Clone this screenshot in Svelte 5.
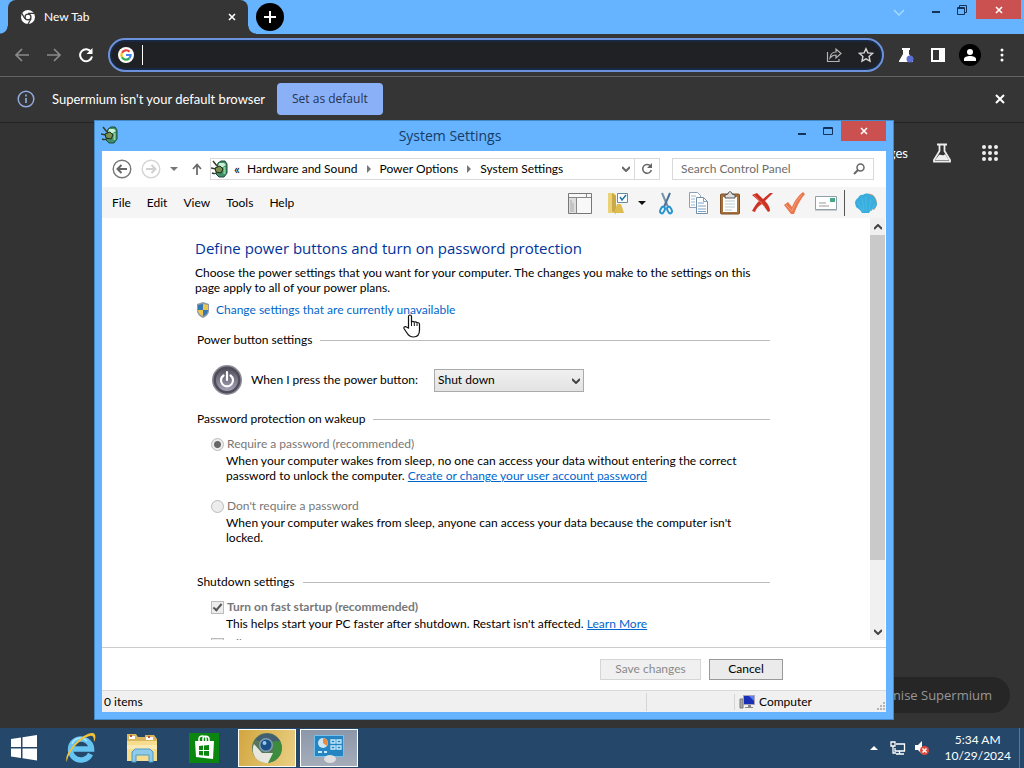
<script>
  let query = '';
  let address = '';
  let powerAction = 'Shut down';

  const menus = ['File', 'Edit', 'View', 'Tools', 'Help'];
  const crumbs = ['Hardware and Sound', 'Power Options', 'System Settings'];
</script>

<!-- battery and plug icon used by the power options window -->
{#snippet powerIcon()}
  <svg class="power-icon" viewBox="0 0 18 18" width="18" height="18" aria-hidden="true">
    <path d="M7 3l3-2h4l2 3v9l-3 4H8l-3-3z" fill="#3f8f68" stroke="#1e4b39" />
    <path d="M8 3h5l2 2-3 2H7z" fill="#c9efd5" />
    <path d="M13.500 7v7" stroke="#86d3a0" stroke-width="2" />
    <path d="M2 1l4 5M0 8l5 1" stroke="#333d28" stroke-width="1.500" />
    <path d="M4 8l5-2 3 3-2 4-5-1z" fill="#7c8f50" stroke="#1d2b1b" />
    <path d="M1 13c3 1 4 1 5-1" stroke="#2b4033" stroke-width="1.500" fill="none" />
  </svg>
{/snippet}

<div class="desktop">
  <!-- browser -->
  <div class="browser">
    <div class="tab-strip">
      <span class="tab-foot"></span>
      <div class="tab">
        <svg viewBox="0 0 16 16" width="16" height="16" aria-hidden="true">
          <circle cx="8" cy="8" r="7" fill="#fff" />
          <circle cx="8" cy="8" r="3.600" fill="#353535" />
          <circle cx="8" cy="8" r="2.300" fill="#fff" />
          <path d="M8 4.400h6.500M4.900 9.800L1.800 4.400M11.100 9.800L8 15" stroke="#353535" stroke-width="1.200" />
        </svg>
        <span class="tab-title">New Tab</span>
        <button class="plain" aria-label="Close tab">
          <svg viewBox="0 0 8 8" width="8" height="8"><path d="M1 1l6 6M7 1L1 7" stroke="#fff" stroke-width="1.600" /></svg>
        </button>
      </div>
      <span class="tab-foot right"></span>
      <button class="new-tab" aria-label="New tab">
        <svg viewBox="0 0 12 12" width="12" height="12"><path d="M6 0v12M0 6h12" stroke="#fff" stroke-width="2" /></svg>
      </button>
      <div class="browser-controls">
        <button class="plain search-tabs" aria-label="Search tabs">
          <svg viewBox="0 0 12 8" width="12" height="8"><path d="M1 1l5 5 5-5" fill="none" stroke="#a4dcff" stroke-width="1.500" /></svg>
        </button>
        <button class="plain control" aria-label="Minimize">
          <svg viewBox="0 0 10 10" width="10" height="10"><path d="M1 7h8" stroke="#12345a" stroke-width="2" /></svg>
        </button>
        <button class="plain control" aria-label="Restore">
          <svg viewBox="0 0 10 10" width="10" height="10"><path d="M.5 2.500h7v7h-7zM2.500 2.500v-2h7v7h-2M.5 3.500h7" fill="none" stroke="#12345a" /></svg>
        </button>
        <button class="close-button browser-close" aria-label="Close">
          <svg viewBox="0 0 8 8" width="8" height="8"><path d="M1 1l6 6M7 1L1 7" stroke="#fff" stroke-width="1.600" /></svg>
        </button>
      </div>
    </div>

    <div class="toolbar">
      <button class="plain" aria-label="Back">
        <svg viewBox="0 0 16 16" width="16" height="16"><path d="M15 8H2M8 2L2 8l6 6" fill="none" stroke="#8a8a8a" stroke-width="1.700" /></svg>
      </button>
      <button class="plain" aria-label="Forward">
        <svg viewBox="0 0 16 16" width="16" height="16"><path d="M1 8h13M8 2l6 6-6 6" fill="none" stroke="#8a8a8a" stroke-width="1.700" /></svg>
      </button>
      <button class="plain" aria-label="Reload">
        <svg viewBox="0 0 16 16" width="16" height="16"><path d="M13.200 5A6 6 0 1 0 14 9.500" fill="none" stroke="#fff" stroke-width="2" /><path d="M14.500 1v6h-6z" fill="#fff" /></svg>
      </button>
      <div class="omnibox">
        <svg viewBox="0 0 16 16" width="16" height="16" aria-hidden="true">
          <circle cx="8" cy="8" r="8" fill="#fff" />
          <g fill="none" stroke-width="2.200">
            <path d="M11.500 4.800A4.600 4.600 0 0 0 4 5.700" stroke="#ea4335" />
            <path d="M4 5.700a4.600 4.600 0 0 0 0 4.600" stroke="#fbbc05" />
            <path d="M4 10.300a4.600 4.600 0 0 0 7.200 1.100" stroke="#34a853" />
            <path d="M11.200 11.400A4.600 4.600 0 0 0 12.600 8H8" stroke="#4285f4" />
          </g>
        </svg>
        <span class="caret"></span>
        <input aria-label="Address" bind:value={address} />
        <button class="plain" aria-label="Share">
          <svg viewBox="0 0 16 16" width="16" height="16"><path d="M1.500 5v9.500H13V12M4 11c.5-4 2.500-6 6-6V2l5 4.500L10 11V8c-3 0-4.500 1-6 3z" fill="none" stroke="#b4b4b4" stroke-width="1.200" /></svg>
        </button>
        <button class="plain" aria-label="Bookmark">
          <svg viewBox="0 0 16 16" width="16" height="16"><path d="M8 1.700l1.900 4.200 4.600.5-3.400 3.100.9 4.600-4-2.300-4 2.300.9-4.600L1.500 6.400l4.600-.5z" fill="none" stroke="#d5d5d5" stroke-width="1.400" /></svg>
        </button>
      </div>
      <button class="plain" aria-label="Experiments">
        <svg viewBox="0 0 16 16" width="16" height="16"><path d="M4 1h8v2h-1v4l4 7v1H1v-1l4-7V3H4z" fill="#fff" /><circle cx="12" cy="12" r="3.500" fill="#5b6fd0" /></svg>
      </button>
      <button class="plain" aria-label="Side panel">
        <svg viewBox="0 0 16 16" width="16" height="16"><path d="M1 1h14v14H1z" fill="#fff" /><path d="M3 3h6v10H3z" fill="#353535" /></svg>
      </button>
      <button class="plain profile" aria-label="Profile">
        <svg viewBox="0 0 22 22" width="22" height="22"><circle cx="11" cy="11" r="11" fill="#000" /><circle cx="11" cy="8" r="3" fill="#fff" /><path d="M5 17v-2c0-4 12-4 12 0v2z" fill="#fff" /></svg>
      </button>
      <button class="plain" aria-label="Menu">
        <svg viewBox="0 0 16 16" width="16" height="16" fill="#fff"><circle cx="8" cy="3" r="1.500" /><circle cx="8" cy="8" r="1.500" /><circle cx="8" cy="13" r="1.500" /></svg>
      </button>
    </div>

    <div class="infobar">
      <svg viewBox="0 0 18 18" width="18" height="18" aria-hidden="true"><circle cx="9" cy="9" r="7.800" fill="none" stroke="#91a9de" stroke-width="1.500" /><path d="M9 8v5M9 4.500v2" stroke="#91a9de" stroke-width="1.700" /></svg>
      <span>Supermium isn't your default browser</span>
      <button class="default-button">Set as default</button>
      <button class="plain infobar-close" aria-label="Dismiss">
        <svg viewBox="0 0 10 10" width="10" height="10"><path d="M1 1l8 8M9 1L1 9" stroke="#fff" stroke-width="2" /></svg>
      </button>
    </div>

    <div class="page">
      <nav class="page-nav">
        <a href="#images">Images</a>
        <button class="plain" aria-label="Labs">
          <svg viewBox="0 0 20 20" width="20" height="20"><path d="M5 1.500h10M7.500 2v6L2 17v1.500h16V17l-5.500-9V2" fill="none" stroke="#eee" stroke-width="1.800" /><path d="M3 17l4-5c2-1 4 2 6-1l4 6z" fill="#eee" /></svg>
        </button>
        <button class="plain" aria-label="Apps">
          <svg viewBox="0 0 18 18" width="18" height="18" fill="#eee">
            {#each [3, 9, 15] as cy}
              {#each [3, 9, 15] as cx}
                <circle {cx} {cy} r="2" />
              {/each}
            {/each}
          </svg>
        </button>
      </nav>
      <button class="customise">Customise Supermium</button>
    </div>
  </div>

  <!-- system settings window -->
  <div class="window">
    <header class="title-bar">
      {@render powerIcon()}
      <h1>System Settings</h1>
      <div class="window-controls">
        <button class="plain control" aria-label="Minimize">
          <svg viewBox="0 0 10 10" width="10" height="10"><path d="M1 8h8" stroke="#12345a" stroke-width="2" /></svg>
        </button>
        <button class="plain control" aria-label="Maximize">
          <svg viewBox="0 0 10 10" width="10" height="10"><path d="M.5 1.500h9v7h-9zM.5 2.500h9" fill="none" stroke="#12345a" /></svg>
        </button>
        <button class="close-button" aria-label="Close">
          <svg viewBox="0 0 8 8" width="8" height="8"><path d="M1 1l6 6M7 1L1 7" stroke="#fff" stroke-width="1.600" /></svg>
        </button>
      </div>
    </header>

    <div class="client">
      <div class="address-row">
        <button class="plain" aria-label="Back">
          <svg viewBox="0 0 20 20" width="20" height="20" fill="none"><circle cx="10" cy="10" r="8.800" stroke="#777" stroke-width="1.400" /><path d="M15 10H6M9.500 6l-4 4 4 4" stroke="#666" stroke-width="2" /></svg>
        </button>
        <button class="plain" aria-label="Forward">
          <svg viewBox="0 0 20 20" width="20" height="20" fill="none"><circle cx="10" cy="10" r="8.800" stroke="#d4d4d4" stroke-width="1.400" /><path d="M5 10h9M10.500 6l4 4-4 4" stroke="#d0d0d0" stroke-width="2" /></svg>
        </button>
        <button class="plain" aria-label="Recent locations">
          <svg viewBox="0 0 8 4" width="8" height="4"><path d="M0 0h8L4 4z" fill="#777" /></svg>
        </button>
        <button class="plain up" aria-label="Up">
          <svg viewBox="0 0 12 12" width="12" height="12"><path d="M6 12V2M2 6l4-4.500L10 6" fill="none" stroke="#666" stroke-width="1.700" /></svg>
        </button>
        <div class="address">
          {@render powerIcon()}
          <span class="chevrons">«</span>
          {#each crumbs as crumb, i}
            {#if i > 0}
              <svg viewBox="0 0 4 8" width="4" height="8" aria-hidden="true"><path d="M0 0l4 4-4 4z" fill="#777" /></svg>
            {/if}
            <a href="#{i}">{crumb}</a>
          {/each}
          <button class="plain drop" aria-label="Previous locations">
            <svg viewBox="0 0 8 6" width="8" height="6"><path d="M0 1l4 4 4-4" fill="none" stroke="#666" stroke-width="2" /></svg>
          </button>
          <button class="plain refresh" aria-label="Refresh">
            <svg viewBox="0 0 12 12" width="12" height="12"><path d="M9.500 3A4.400 4.400 0 1 0 10.400 7" fill="none" stroke="#666" stroke-width="1.500" /><path d="M11 0v5H6z" fill="#666" /></svg>
          </button>
        </div>
        <div class="search">
          <input type="text" placeholder="Search Control Panel" aria-label="Search Control Panel" bind:value={query} />
          <svg viewBox="0 0 12 12" width="12" height="12" aria-hidden="true"><circle cx="7.500" cy="4.500" r="3.500" fill="none" stroke="#666" stroke-width="1.500" /><path d="M5 7l-4 4" stroke="#666" stroke-width="2" /></svg>
        </div>
      </div>

      <div class="menu-bar">
        {#each menus as menu}
          <button class="plain menu">{menu}</button>
        {/each}
        <div class="tools">
          <button class="plain" aria-label="Layout">
            <svg viewBox="0 0 24 24" width="24" height="24"><path d="M.5 2.500h23v20H.5z" fill="#f8f8f8" stroke="#777" /><path d="M1 6.500h22M8.500 6.500v16M18.500 3v3" stroke="#888" /><path d="M1 7h7v15H1z" fill="#ddd" /><path d="M3 9v12M5 12v9" stroke="#aaa" /></svg>
          </button>
          <button class="plain organize" aria-label="Organize">
            <svg viewBox="0 0 24 24" width="24" height="24"><path d="M2 2h6l2 2v18H2z" fill="#ead376" /><path d="M6 2l4 3v18l-4-3z" fill="#c9a948" /><path d="M11 13h4l3 9H8z" fill="#ddbc50" /><path d="M11.500 2.500h10v9h-10z" fill="#fff" stroke="#668b9b" /><path d="M14 6l2 3 4-5" fill="none" stroke="#1d76a3" stroke-width="1.500" /></svg>
            <svg viewBox="0 0 8 4" width="8" height="4"><path d="M0 0h8L4 4z" fill="#111" /></svg>
          </button>
          <button class="plain" aria-label="Cut">
            <svg viewBox="0 0 24 24" width="24" height="24" fill="none"><path d="M8 2l6 14" stroke="#7793aa" stroke-width="2" /><path d="M16 2l-6 14" stroke="#4d7497" stroke-width="2" /><ellipse cx="8.500" cy="19" rx="2" ry="3.500" transform="rotate(25 8.500 19)" stroke="#2794d0" stroke-width="2" /><ellipse cx="15.500" cy="19" rx="2" ry="3.500" transform="rotate(-25 15.500 19)" stroke="#2794d0" stroke-width="2" /></svg>
          </button>
          <button class="plain" aria-label="Copy">
            <svg viewBox="0 0 24 24" width="24" height="24"><path d="M3.500 1.500h8l3 3v12h-11z" fill="#fff" stroke="#8ba0b5" /><path d="M5 5h5M5 8h4M5 11h4M5 14h4" stroke="#9bb8d2" /><path d="M10.500 6.500h7l4 4v12h-11z" fill="#fff" stroke="#7290aa" /><path d="M17.500 6.500v4h4M12 12h6M12 15h8M12 18h8M12 20.500h8" fill="none" stroke="#7aa3c7" /></svg>
          </button>
          <button class="plain" aria-label="Paste">
            <svg viewBox="0 0 24 24" width="24" height="24"><rect x="2.500" y="3" width="19" height="20" rx="1" fill="#a8713b" stroke="#7d5129" /><path d="M5 6h14v15H5z" fill="#fff" /><path d="M7 10h10M7 13h10M7 16h10M7 19h7" stroke="#b9c8d3" /><path d="M7 7V4l3-1c0-3 4-3 4 0l3 1v3z" fill="#ddd" stroke="#555" /></svg>
          </button>
          <button class="plain" aria-label="Delete">
            <svg viewBox="0 0 24 24" width="24" height="24"><path d="M2 4l5-2 6 6 7-6h3l-8 8c3 3 5 6 5 10l-2 1c-2-3-4-6-6-8-4 2-6 5-7 8l-3-1c2-4 4-7 7-10z" fill="#cd3324" /><path d="M4 4l11 12" stroke="#ed7761" /></svg>
          </button>
          <button class="plain" aria-label="Confirm">
            <svg viewBox="0 0 24 24" width="24" height="24"><path d="M2 14l4-3 4 5c3-7 6-11 11-15l2 2c-5 6-8 12-11 20H9z" fill="#e9784e" /><path d="M4 14l6 6c3-8 6-12 10-16" fill="none" stroke="#f7a17c" /></svg>
          </button>
          <button class="plain" aria-label="Mail">
            <svg viewBox="0 0 24 24" width="24" height="24"><path d="M1.500 5.500h21v13h-21z" fill="#fff" stroke="#8da0ac" /><path d="M16 7h5v4h-5z" fill="#45a889" /><path d="M5 12h7M5 15h10" stroke="#999" /><path d="M1 19.500h22" stroke="#ccc" /></svg>
          </button>
          <span class="separator"></span>
          <button class="plain" aria-label="Shell">
            <svg viewBox="0 0 24 24" width="24" height="24"><path d="M5 9c3-5 9-8 14-5 5 4 5 11 1 15z" fill="#b99773" /><path d="M1 12c0-2 1-4 3-5 1-2 3-4 5-3 2-2 5-2 7 0 3 0 5 2 5 5 3 3 2 6 0 8l-4 2-2 3H8l-2-3-4-3z" fill="#37aede" /><path d="M9 21L4 11m6 9L8 7m4 13V6m3 14l2-12m0 12l4-7" stroke="#4dbae6" /></svg>
          </button>
        </div>
      </div>

      <div class="body">
        <div class="content">
          <h2>Define power buttons and turn on password protection</h2>
          <p>Choose the power settings that you want for your computer. The changes you make to the settings on this<br />page apply to all of your power plans.</p>
          <a class="admin-link" href="#unlock">
            <svg viewBox="0 0 16 16" width="16" height="16" aria-hidden="true"><path d="M8 0l6 2v6c0 4-2 6-6 8-4-2-6-4-6-8V2z" fill="#8e9ba5" /><path d="M8 2v6H3V3z" fill="#3479b4" /><path d="M8 2l5 1v5H8z" fill="#edc650" /><path d="M3 8h5v6c-3-1-5-3-5-6z" fill="#edc650" /><path d="M8 8h5c0 3-2 5-5 6z" fill="#3479b4" /></svg>
            Change settings that are currently unavailable
          </a>

          <section>
            <h3>Power button settings</h3>
            <div class="power-row">
              <svg viewBox="0 0 32 32" width="32" height="32" aria-hidden="true">
                <defs><linearGradient id="orb" x1="0" y1="0" x2="0" y2="1"><stop offset="0" stop-color="#55535f" /><stop offset="1" stop-color="#a5a3b7" /></linearGradient></defs>
                <circle cx="16" cy="16" r="15" fill="#8e8c97" />
                <circle cx="16" cy="16" r="13.500" fill="#4f4d5a" />
                <circle cx="16" cy="16" r="11" fill="url(#orb)" />
                <path d="M12.500 11.500a6 6 0 1 0 7 0M16 8v8" fill="none" stroke="#fff" stroke-width="2.200" stroke-linecap="round" />
              </svg>
              <label for="power-action">When I press the power button:</label>
              <div class="select">
                <select id="power-action" bind:value={powerAction}>
                  <option>Do nothing</option>
                  <option>Sleep</option>
                  <option>Shut down</option>
                </select>
                <svg viewBox="0 0 8 6" width="8" height="6" aria-hidden="true"><path d="M0 1l4 4 4-4" fill="none" stroke="#444" stroke-width="2" /></svg>
              </div>
            </div>
          </section>

          <section>
            <h3>Password protection on wakeup</h3>
            <label class="option"><input type="radio" name="wakeup" checked disabled />Require a password (recommended)</label>
            <p class="detail">When your computer wakes from sleep, no one can access your data without entering the correct<br />password to unlock the computer. <a href="#account">Create or change your user account password</a></p>
            <label class="option second"><input type="radio" name="wakeup" disabled />Don't require a password</label>
            <p class="detail">When your computer wakes from sleep, anyone can access your data because the computer isn't<br />locked.</p>
          </section>

          <section class="shutdown">
            <h3>Shutdown settings</h3>
            <label class="option strong"><input type="checkbox" checked disabled />Turn on fast startup (recommended)</label>
            <p class="detail">This helps start your PC faster after shutdown. Restart isn't affected. <a href="#learn">Learn More</a></p>
            <label class="option next"><input type="checkbox" disabled />Hibernate</label>
          </section>
        </div>

        <div class="scrollbar">
          <svg viewBox="0 0 8 6" width="8" height="6" aria-hidden="true"><path d="M0 5l4-4 4 4" fill="none" stroke="#444" stroke-width="2" /></svg>
          <div class="thumb"></div>
          <svg viewBox="0 0 8 6" width="8" height="6" aria-hidden="true"><path d="M0 1l4 4 4-4" fill="none" stroke="#444" stroke-width="2" /></svg>
        </div>
      </div>

      <div class="actions">
        <button class="save" disabled>Save changes</button>
        <button class="cancel">Cancel</button>
      </div>

      <footer class="status">
        <span class="items">0 items</span>
        <span class="blank"></span>
        <span class="zone">
          <svg viewBox="0 0 16 16" width="16" height="16" aria-hidden="true"><path d="M1 5h3v9H1z" fill="#aaa" stroke="#777" /><path d="M4.500 1.500h11v9h-11z" fill="#1a2fb5" stroke="#a5a5b8" /><path d="M10 2h5v5z" fill="#5b7df0" /><path d="M9 11h3v2h2v1H6v-1h3z" fill="#888" /></svg>
          Computer
        </span>
        <svg class="grip" viewBox="0 0 9 9" width="9" height="9" fill="#b5b5b5" aria-hidden="true"><path d="M7 0h2v2H7zM7 3h2v2H7zM7 6h2v2H7zM4 3h2v2H4zM4 6h2v2H4zM1 6h2v2H1z" /></svg>
      </footer>
    </div>
  </div>

  <!-- mouse pointer -->
  <svg class="pointer" viewBox="0 0 18 24" width="18" height="24" aria-hidden="true"><path d="M5.500 14V2.500c0-2 3-2 3 0v6c0-1.500 2.600-1.500 2.800.3 0-1.200 2.500-1.200 2.700.5.200-1 2.500-.8 2.500 1V16c0 4-2 7-6 7-3.500 0-5-1.500-6.500-4L1 14.500c-.6-1.500 1.300-2.500 2.500-1.500z" fill="#fff" stroke="#111" stroke-width="1.200" /><path d="M8.500 8v4M11.300 9v3M14 9.500V12" stroke="#111" /></svg>

  <!-- taskbar -->
  <div class="taskbar">
    <button class="plain start" aria-label="Start">
      <svg viewBox="0 0 28 26" width="28" height="26"><path d="M1 4l10-1.500V12H1zM12.500 2.200L27 0v12H12.500zM1 13.500h10V23L1 21.500zM12.500 13.500H27V25.500l-14.500-2.200z" fill="#fff" /></svg>
    </button>
    <button class="plain task" aria-label="Internet Explorer">
      <svg viewBox="0 0 32 32" width="32" height="32" fill="none"><path d="M26.500 22a10.500 10.500 0 1 1 1-5H9" stroke="#66c4f2" stroke-width="5.500" /><path d="M23 9a9 9 0 0 0-15 3" stroke="#aee6fc" stroke-width="1.500" /><path d="M3 30C-2 22 20-1 29 1c3 1 3 5 1 9 0-5-1-7-4-6C16 6 4 20 3 30z" fill="#efc23a" /></svg>
    </button>
    <button class="plain task" aria-label="File Explorer">
      <svg viewBox="0 0 32 32" width="32" height="32"><path d="M1 2h9l2 3h7V3h9l3 4v22H1z" fill="#d9b65c" /><path d="M3 4h6v3H3zM20 5h7v3h-7z" fill="#fff" /><path d="M4 3h2v2H4zM22 4h2v2h-2z" fill="#c74c37" /><path d="M1 9h30v20H1z" fill="#f6dc8e" /><path d="M1 15h30" stroke="#fbe9b4" stroke-width="4" /><path d="M6 30V20l3-3h15l3 3v10h-4v-7H10v7z" fill="#8dcbe9" stroke="#4f9bc5" /></svg>
    </button>
    <button class="plain task" aria-label="Store">
      <svg viewBox="0 0 32 32" width="32" height="32"><path d="M1 1h30v30H1z" fill="#0b870f" /><path d="M11 10V7c0-4 7-4 7 0v3M15 10V6c1-3 6-2 6 1v3" fill="none" stroke="#fff" stroke-width="1.500" /><path d="M7 9h19l-1 18-17-2z" fill="#fff" /><path d="M11 14l4-.5V18h-4zM16 13.400l5-.5V18h-5zM11 19h4v4.500l-4-.5zM16 19h5v5l-5-.5z" fill="#0b870f" /></svg>
    </button>
    <button class="plain running gold" aria-label="Supermium">
      <svg viewBox="0 0 32 32" width="32" height="32"><circle cx="16" cy="16" r="15" fill="#56775b" /><path d="M4 8a15 15 0 0 1 25 1L16 10z" fill="#435f72" /><path d="M29 9c5 10-2 21-13 22l6-12c1-4 0-7-3-9z" fill="#3b8c3c" /><path d="M3 12l8 9h11l-5 10C5 31-1 21 3 12z" fill="#e8e7df" /><circle cx="15" cy="13" r="7" fill="#7f9fb2" /><circle cx="15" cy="13" r="5.500" fill="#1c4f85" /><circle cx="13.500" cy="11" r="2" fill="#92c8e9" /></svg>
    </button>
    <button class="plain running" aria-label="System Settings">
      <svg viewBox="0 0 32 32" width="32" height="32"><path d="M1.500 3.500h29v21h-29z" fill="#2584c2" stroke="#76c1eb" /><circle cx="10" cy="11" r="5" fill="#cbe5f2" /><path d="M10 11V6a5 5 0 0 1 4 8z" fill="#eb8b3a" /><path d="M18 8h4v3h-4zM24 8h4v3h-4zM18 14h4v3h-4zM24 14h4v3h-4z" fill="none" stroke="#c7eafc" stroke-width="1.300" /><path d="M5 20h4M11 20h3" stroke="#c7eafc" stroke-width="2" /><ellipse cx="17" cy="27" rx="6" ry="4" fill="#dedede" /></svg>
    </button>

    <div class="tray">
      <button class="plain" aria-label="Show hidden icons">
        <svg viewBox="0 0 8 4" width="8" height="4"><path d="M0 4h8L4 0z" fill="#fff" /></svg>
      </button>
      <svg viewBox="0 0 16 16" width="16" height="16" aria-label="Network" role="img"><path d="M6 4h8.500v7H5V8M9.500 11v2.500M6 14h8" fill="none" stroke="#fff" stroke-width="1.300" /><path d="M1 2h4v4H1zM3 6v7h3" fill="none" stroke="#fff" stroke-width="1.300" /></svg>
      <svg viewBox="0 0 16 16" width="16" height="16" aria-label="Muted" role="img"><path d="M1 5h3l4-4v13l-4-4H1z" fill="#fff" /><circle cx="10.500" cy="10.500" r="4.500" fill="#dc4a3e" /><path d="M8.500 8.500l4 4M12.500 8.500l-4 4" stroke="#fff" stroke-width="1.500" /></svg>
      <div class="clock">
        <span>5:34 AM</span>
        <span>10/29/2024</span>
      </div>
      <span class="show-desktop"></span>
    </div>
  </div>
</div>

<style>
  :global(body) {
    background: #333;
  }

  .desktop {
    position: relative;
    display: flex;
    flex-direction: column;
    min-height: 100vh;
    overflow: hidden;
    font-family: Lato, "Open Sans", sans-serif;
    font-size: 12px;
    line-height: 16px;
    color: #000;
  }

  h1, h2, .default-button, .customise {
    font-family: "Open Sans", "Noto Sans", sans-serif;
  }

  button, input, select {
    font: inherit;
    color: inherit;
    box-sizing: border-box;
  }

  svg {
    display: block;
    flex: none;
  }

  .plain {
    display: flex;
    align-items: center;
    padding: 0;
    border: none;
    background: none;
  }

  /* browser */
  .browser {
    display: flex;
    flex-direction: column;
    flex: 1;
    color: #fff;
  }

  .tab-strip {
    display: flex;
    align-items: flex-start;
    height: 34px;
    padding-right: 3px;
    background: #66b3ff;
  }

  .tab {
    display: flex;
    align-items: center;
    gap: 8px;
    width: 240px;
    height: 34px;
    padding: 0 12px;
    box-sizing: border-box;
    border-radius: 8px 8px 0 0;
    background: #353535;
  }

  .tab-foot {
    align-self: flex-end;
    width: 8px;
    height: 8px;
    background: radial-gradient(circle at 0 0, transparent 7px, #353535 8px);
  }

  .tab-foot.right {
    background: radial-gradient(circle at 100% 0, transparent 7px, #353535 8px);
  }

  .tab-title {
    flex: 1;
  }

  .new-tab {
    display: flex;
    align-items: center;
    justify-content: center;
    width: 28px;
    height: 28px;
    margin: 3px 0;
    padding: 0;
    border: none;
    border-radius: 50%;
    background: #000;
  }

  .browser-controls, .window-controls {
    display: flex;
    align-items: flex-start;
    margin-left: auto;
  }

  .window-controls {
    margin-right: -1px;
  }

  .control {
    justify-content: center;
    width: 26px;
    height: 20px;
  }

  .search-tabs {
    height: 26px;
    margin-right: 18px;
  }

  .close-button {
    display: flex;
    align-items: center;
    justify-content: center;
    width: 45px;
    height: 20px;
    padding: 0;
    border: none;
    background: #cb5050;
  }

  .browser-close {
    height: 19px;
    margin-left: 1px;
  }

  .toolbar {
    display: flex;
    align-items: center;
    gap: 16px;
    height: 42px;
    padding: 0 14px;
    border-bottom: 1px solid #626262;
    background: #353535;
  }

  .omnibox {
    display: flex;
    align-items: center;
    flex: 1;
    gap: 8px;
    height: 34px;
    margin-left: -2px;
    margin-right: -2px;
    padding: 0 8px;
    box-sizing: border-box;
    border: 2px solid #6c92dc;
    border-radius: 17px;
    background: #202124;
    box-shadow: inset 0 0 0 2px #182946;
  }

  .omnibox input {
    flex: 1;
    min-width: 0;
    border: none;
    outline: none;
    background: none;
  }

  .omnibox button + button {
    margin-left: 8px;
  }

  .caret {
    width: 1px;
    height: 20px;
    background: #fff;
  }

  .profile {
    margin: 0 -3px;
  }

  .infobar {
    display: flex;
    align-items: center;
    height: 43px;
    padding: 0 19px 2px 17px;
    border-bottom: 1px solid #222;
    background: #353535;
    font-size: 13px;
  }

  .infobar span {
    margin: 0 12px 0 17px;
  }

  .default-button {
    height: 32px;
    padding: 0 15px;
    border: none;
    border-radius: 4px;
    background: #8ab0f8;
    color: #25344f;
    font-size: 12px;
  }

  .infobar-close {
    margin-left: auto;
  }

  .page {
    display: flex;
    flex-direction: column;
    align-items: flex-end;
    justify-content: space-between;
    flex: 1;
    background: #333;
  }

  .page-nav {
    display: flex;
    align-items: center;
    gap: 24px;
    padding: 20px 25px;
    font-size: 13px;
  }

  .page-nav a {
    color: #fff;
    text-decoration: none;
  }

  .page-nav button + button {
    margin-left: 5px;
  }

  .customise {
    height: 36px;
    margin: 0 14px 15px;
    padding: 0 18px;
    border: none;
    border-radius: 18px;
    background: #262626;
    color: #979797;
    font-size: 13px;
  }

  /* window */
  .window {
    position: absolute;
    top: 120px;
    bottom: 48px;
    left: 94px;
    right: 130px;
    display: flex;
    flex-direction: column;
    padding: 0 8px 8px;
    border: 1px solid #4389c9;
    box-sizing: border-box;
    background: #66b3ff;
  }

  .title-bar {
    display: flex;
    height: 30px;
  }

  .title-bar .power-icon {
    margin: 5px 0 0 -2px;
  }

  h1 {
    flex: 1;
    margin: 0 8px 0 0;
    font-size: 14px;
    font-weight: 400;
    line-height: 30px;
    text-align: center;
    color: #153c66;
  }

  .client {
    display: flex;
    flex-direction: column;
    flex: 1;
    min-height: 0;
    margin: 0 -1px -1px;
    background: #fff;
  }

  .address-row {
    display: flex;
    align-items: center;
    gap: 9px;
    height: 36px;
    padding: 0 12px 0 10px;
  }

  .up {
    margin: 0 -2px 0 4px;
  }

  .address, .search {
    display: flex;
    align-items: center;
    height: 22px;
    box-sizing: border-box;
    border: 1px solid #d9d9d9;
  }

  .address {
    flex: 1;
    gap: 9px;
  }

  .address a {
    color: #000;
    text-decoration: none;
  }

  .chevrons {
    margin: 0 -2px 0 -4px;
    font-size: 14px;
  }

  .drop {
    margin: 0 -5px 0 auto;
  }

  .refresh {
    align-self: stretch;
    padding: 0 6px;
    border-left: 1px solid #d9d9d9;
  }

  .search {
    width: 202px;
    margin-left: 3px;
    padding: 0 8px;
  }

  .search input {
    flex: 1;
    min-width: 0;
    padding: 0;
    border: none;
    outline: none;
    background: none;
  }

  .search input::placeholder {
    color: #6d6d6d;
    opacity: 1;
  }

  .menu-bar {
    display: flex;
    align-items: center;
    gap: 16px;
    height: 31px;
    padding: 0 8px 0 10px;
    background: #f5f5f5;
  }

  .tools {
    display: flex;
    align-items: center;
    gap: 8px;
    margin-left: auto;
  }

  .organize {
    gap: 8px;
    margin: 0 0 0 6px;
  }

  .separator {
    width: 1px;
    height: 26px;
    margin: 0 1px 0 -2px;
    background: #555;
  }

  .body {
    display: flex;
    flex: 1;
    min-height: 0;
    margin-bottom: 7px;
  }

  .content {
    flex: 1;
    padding: 18px 100px 0 93px;
    overflow: hidden;
  }

  h2 {
    margin: 0 0 5px;
    font-size: 15px;
    font-weight: 400;
    line-height: 24px;
    color: #003399;
  }

  p {
    margin: 0;
    line-height: 15px;
    white-space: nowrap;
  }

  a {
    color: #0066cc;
  }

  .admin-link {
    display: flex;
    align-items: center;
    gap: 5px;
    height: 20px;
    margin-top: 5px;
    text-decoration: none;
  }

  section {
    margin-top: 12px;
    padding-left: 2px;
  }

  h3 {
    display: flex;
    align-items: center;
    gap: 8px;
    margin: 0;
    font-size: 12px;
    font-weight: 400;
  }

  h3::after {
    content: "";
    flex: 1;
    height: 1px;
    background: #bbb;
  }

  .power-row {
    display: flex;
    align-items: center;
    gap: 8px;
    height: 34px;
    margin-top: 15px;
    padding: 0 0 2px 14px;
  }

  .select {
    position: relative;
    width: 150px;
    margin-left: 8px;
  }

  select {
    width: 100%;
    height: 23px;
    padding: 0 3px;
    border: 1px solid #aaa;
    border-radius: 0;
    background: linear-gradient(#f0f0f0, #e3e3e3);
    appearance: none;
  }

  .select svg {
    position: absolute;
    top: 9px;
    right: 4px;
    pointer-events: none;
  }

  .option {
    display: flex;
    align-items: center;
    gap: 3px;
    height: 16px;
    margin-top: 9px;
    padding-left: 14px;
    color: #777;
  }

  .option input {
    width: 13px;
    height: 13px;
    margin: 0;
    border: 1px solid #bbb;
    background: #ececec;
    appearance: none;
  }

  .option input[type="radio"] {
    border-radius: 50%;
  }

  .option input[type="radio"]:checked {
    background: radial-gradient(circle, #666 0 3px, #ececec 4px);
  }

  .option input[type="checkbox"]:checked::before {
    content: "";
    display: block;
    width: 3px;
    height: 7px;
    margin: 0 3px;
    border: solid #555;
    border-width: 0 2px 2px 0;
    transform: rotate(40deg);
  }

  .second {
    margin-top: 15px;
  }

  .strong {
    font-weight: 700;
  }

  .next {
    margin-top: 5px;
  }

  .detail {
    margin-top: 1px;
    padding-left: 29px;
  }

  .shutdown {
    margin-top: 29px;
  }

  .scrollbar {
    display: flex;
    flex-direction: column;
    align-items: center;
    width: 15px;
    margin-right: 1px;
    padding: 6px 0 5px;
    background: #f0f0f0;
  }

  .thumb {
    width: 15px;
    height: 325px;
    margin: 5px 0 auto;
    background: #c9c9c9;
  }

  .actions {
    display: flex;
    align-items: center;
    justify-content: flex-end;
    gap: 8px;
    height: 42px;
    padding-right: 103px;
    border-top: 1px solid #ccc;
  }

  .actions button {
    height: 21px;
    padding: 0;
    border: 1px solid #999;
    background: #ebebeb;
    line-height: 16px;
  }

  .actions .save {
    width: 101px;
    border-color: #d5d5d5;
    background: #f0f0f0;
    color: #8a8a8a;
  }

  .actions .cancel {
    width: 74px;
  }

  .status {
    display: flex;
    align-items: center;
    height: 21px;
    border-top: 1px solid #d9d9d9;
    background: #f0f0f0;
  }

  .items {
    flex: 1;
    padding-left: 2px;
  }

  .blank {
    width: 87px;
    height: 18px;
    border-left: 1px solid #d5d5d5;
  }

  .zone {
    display: flex;
    align-items: center;
    gap: 4px;
    width: 137px;
    padding-left: 4px;
    border-left: 1px solid #d5d5d5;
  }

  .grip {
    align-self: flex-end;
    margin: 0 1px 1px 0;
  }

  .pointer {
    position: absolute;
    top: 314px;
    left: 403px;
  }

  /* taskbar */
  .taskbar {
    display: flex;
    align-items: center;
    height: 40px;
    background: #25476a;
    color: #fff;
  }

  .start {
    width: 50px;
    padding-left: 10px;
    box-sizing: border-box;
  }

  .task {
    justify-content: center;
    width: 60px;
    height: 40px;
    margin-right: 2px;
  }

  .running {
    justify-content: center;
    width: 58px;
    height: 38px;
    margin: 0 2px;
    border: 1px solid #fff;
    box-sizing: border-box;
    background: linear-gradient(#8c97aa, #a5adba);
  }

  .gold {
    background: linear-gradient(110deg, #d2a640, #ead084);
  }

  .tray {
    display: flex;
    align-items: center;
    gap: 8px;
    margin-left: auto;
  }

  .tray button {
    margin-right: 4px;
  }

  .clock {
    display: flex;
    flex-direction: column;
    align-items: center;
    margin: 0 -4px 0 6px;
  }

  .show-desktop {
    width: 5px;
    height: 40px;
    margin-left: 4px;
    border-left: 1px solid #5b7894;
    box-sizing: border-box;
  }
</style>
